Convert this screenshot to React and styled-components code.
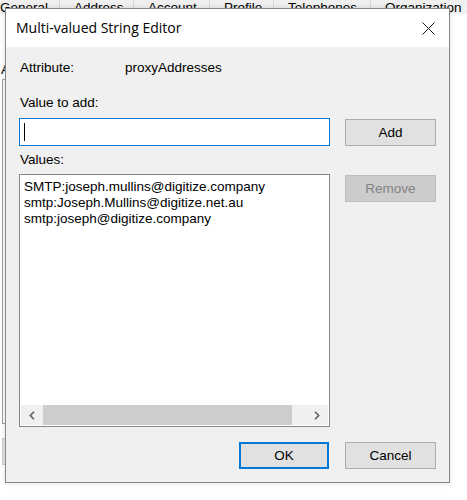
import React from "react";
import styled, { createGlobalStyle } from "styled-components";

const GlobalStyle = createGlobalStyle`
  html, body {
    margin: 0;
    padding: 0;
    background: #ffffff;
    width: 467px;
    height: 500px;
    overflow: hidden;
  }
  body {
    font-family: "Liberation Sans", Arial, sans-serif;
    font-size: 13.5px;
    color: #000;
  }
`;

const tabs = [
  { label: "General", width: 74 },
  { label: "Address", width: 74 },
  { label: "Account", width: 76 },
  { label: "Profile", width: 64 },
  { label: "Telephones", width: 97 },
  { label: "Organization", width: 110 },
];

const values = [
  "SMTP:joseph.mullins@digitize.company",
  "smtp:Joseph.Mullins@digitize.net.au",
  "smtp:joseph@digitize.company",
];

export default function App() {
  return (
    <>
      <GlobalStyle />
      <Sheet>
        <TabStrip>
          {tabs.map((t) => (
            <Tab key={t.label} $width={t.width}>
              {t.label}
            </Tab>
          ))}
        </TabStrip>
        <Pane>
          <PaneLabel>A</PaneLabel>
          <PaneBox />
          <PaneButton />
        </Pane>

        <Dialog>
          <TitleBar>
            <Title>Multi-valued String Editor</Title>
            <CloseButton aria-label="Close">
              <svg width="13" height="13" viewBox="0 0 13 13">
                <path d="M0.5 0.5 L12.5 12.5 M12.5 0.5 L0.5 12.5" stroke="#1a1a1a" strokeWidth="1" fill="none" />
              </svg>
            </CloseButton>
          </TitleBar>
          <Body>
            <AttributeRow>
              <span>Attribute:</span>
              <span>proxyAddresses</span>
            </AttributeRow>
            <Label>Value to add:</Label>
            <Spacer />
            <TextInput>
              <Caret />
            </TextInput>
            <Button>Add</Button>
            <Label $gap={6}>Values:</Label>
            <Spacer />
            <ListBox>
              <Items>
                {values.map((v) => (
                  <Item key={v}>{v}</Item>
                ))}
              </Items>
              <HScroll>
                <ArrowBox>
                  <svg width="6" height="9" viewBox="0 0 6 9">
                    <path d="M5 0.8 L1.3 4.5 L5 8.2" stroke="#606060" strokeWidth="1.6" fill="none" />
                  </svg>
                </ArrowBox>
                <Thumb />
                <Track />
                <ArrowBox>
                  <svg width="6" height="9" viewBox="0 0 6 9">
                    <path d="M1 0.8 L4.7 4.5 L1 8.2" stroke="#606060" strokeWidth="1.6" fill="none" />
                  </svg>
                </ArrowBox>
              </HScroll>
            </ListBox>
            <Button disabled>Remove</Button>
            <Footer>
              <Button $default>OK</Button>
              <Button>Cancel</Button>
            </Footer>
          </Body>
        </Dialog>
      </Sheet>
    </>
  );
}

const Sheet = styled.div`
  position: relative;
  width: 467px;
  height: 500px;
  overflow: hidden;
  background: #ffffff;
`;

const TabStrip = styled.div`
  display: flex;
  height: 14px;
  margin-left: -14px;
  background: #f0f0f0;
  overflow: hidden;
`;

const Tab = styled.div`
  flex: 0 0 ${(p) => p.$width}px;
  box-sizing: border-box;
  padding-left: 14px;
  border-right: 1px solid #d9d9d9;
  line-height: 16px;
  white-space: nowrap;
`;

const Pane = styled.div`
  display: flex;
  flex-direction: column;
  padding: 48px 0 0 1px;
`;

const PaneLabel = styled.div`
  line-height: 16px;
  white-space: nowrap;
`;

const PaneBox = styled.div`
  margin: 1px 0 0 1px;
  width: 300px;
  height: 343px;
  border: 1px solid #a0a0a0;
  background: #fff;
`;

const PaneButton = styled.div`
  margin: 14px 0 0 1px;
  width: 80px;
  height: 27px;
  box-sizing: border-box;
  border: 1px solid #cfcfcf;
  background: #e5e5e5;
`;

const Dialog = styled.div`
  position: absolute;
  left: 5px;
  top: 8px;
  width: 445px;
  height: 475px;
  box-sizing: border-box;
  border: 1px solid #868686;
  background: #f0f0f0;
  display: flex;
  flex-direction: column;
  box-shadow: 0 0 6px rgba(0, 0, 0, 0.12);
`;

const TitleBar = styled.div`
  height: 38px;
  flex: 0 0 38px;
  background: #ffffff;
  display: flex;
  align-items: center;
  justify-content: space-between;
  padding: 0 10px 0 10px;
`;

const Title = styled.div`
  font-family: "Open Sans", "Noto Sans", sans-serif;
  font-size: 14px;
  color: #000;
  margin-top: -1px;
`;

const CloseButton = styled.div`
  width: 20px;
  height: 20px;
  display: flex;
  align-items: center;
  justify-content: center;
  margin-right: 1px;
`;

const Body = styled.div`
  flex: 1;
  display: grid;
  grid-template-columns: 311px 91px;
  column-gap: 15px;
  align-content: start;
  align-items: start;
  padding: 13px;
`;

const AttributeRow = styled.div`
  grid-column: 1 / 3;
  display: grid;
  grid-template-columns: 105px auto;
  line-height: 16px;
  padding-left: 1px;
`;

const Label = styled.div`
  grid-column: 1;
  line-height: 16px;
  padding-left: 1px;
  margin-top: ${(p) => p.$gap ?? 19}px;
  margin-bottom: ${(p) => (p.$gap ? 6 : 7)}px;
`;

const Spacer = styled.div``;

const TextInput = styled.div`
  height: 28px;
  box-sizing: border-box;
  border: 1px solid #0078d7;
  background: #fff;
  display: flex;
  align-items: center;
  padding-left: 4px;
`;

const Caret = styled.div`
  width: 1px;
  height: 18px;
  background: #000;
`;

const Button = styled.button`
  height: 27px;
  width: ${(p) => (p.$default ? 90 : 91)}px;
  margin-top: 1px;
  box-sizing: border-box;
  font-family: "Liberation Sans", Arial, sans-serif;
  font-size: 13.5px;
  color: ${(p) => (p.disabled ? "#838383" : "#000")};
  background: ${(p) => (p.disabled ? "#cccccc" : "#e1e1e1")};
  border: 1px solid ${(p) => (p.disabled ? "#bfbfbf" : p.$default ? "#0078d7" : "#adadad")};
  box-shadow: ${(p) => (p.$default ? "inset 0 0 0 1px #0078d7" : "none")};
  padding: 0;
  border-radius: 0;
`;

const ListBox = styled.div`
  height: 253px;
  box-sizing: border-box;
  border: 1px solid #828790;
  padding: 1px;
  background: #fff;
  display: flex;
  flex-direction: column;
`;

const Items = styled.div`
  flex: 1;
  padding: 3px 0 0 3px;
  overflow: hidden;
`;

const Item = styled.div`
  line-height: 16px;
  white-space: nowrap;
`;

const HScroll = styled.div`
  height: 20px;
  display: flex;
  background: #f0f0f0;
`;

const ArrowBox = styled.div`
  flex: 0 0 22px;
  display: flex;
  align-items: center;
  justify-content: center;
`;

const Thumb = styled.div`
  flex: 0 0 249px;
  background: #cdcdcd;
`;

const Track = styled.div`
  flex: 1;
`;

const Footer = styled.div`
  grid-column: 1 / 3;
  display: flex;
  justify-content: flex-end;
  gap: 16px;
  margin-top: 14px;
`;
